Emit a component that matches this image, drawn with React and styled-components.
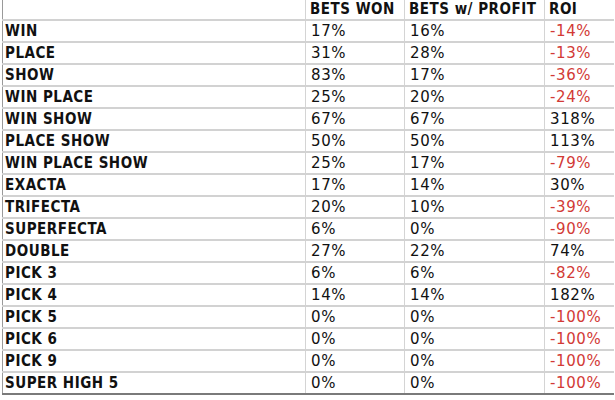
import React from "react";
import styled, { createGlobalStyle } from "styled-components";

const Global = createGlobalStyle`
  html, body { margin: 0; padding: 0; background: #fff; }
  body { font-family: "DejaVu Sans", Verdana, sans-serif; }
`;

const Frame = styled.div`
  width: 615px;
  height: 400px;
  overflow: hidden;
  background: #fff;
  padding-left: 2px;
  box-sizing: border-box;
`;

const Table = styled.table`
  border-collapse: collapse;
  table-layout: fixed;
  width: 611px;
  border-left: 1px solid #9a9a9a;
  border-bottom: 2px solid #7a7a7a;
`;

const Col = styled.col`
  width: ${(p) => p.$w}px;
`;

const Cell = styled.td`
  height: 20px;
  padding: 0 0 0 ${(p) => (p.$first ? 2 : 5)}px;
  border-top: 2px solid #d2d2d2;
  border-left: ${(p) => (p.$first ? "none" : "1px solid #d4d4d4")};
  font-size: 15px;
  line-height: 20px;
  white-space: nowrap;
  overflow: hidden;
  color: ${(p) => (p.$neg ? "#d23a36" : "#111")};
  font-weight: ${(p) => (p.$first ? 700 : 400)};
  font-family: ${(p) => (p.$first ? '"DejaVu Sans Condensed", "DejaVu Sans", sans-serif' : '"DejaVu Sans", Verdana, sans-serif')};
  letter-spacing: ${(p) => (p.$first ? "0.5px" : "0.6px")};
`;

const Head = styled.th`
  height: 19px;
  padding: 0 0 0 4px;
  text-align: left;
  font-size: 15px;
  line-height: 19px;
  font-weight: 700;
  color: #111;
  white-space: nowrap;
  letter-spacing: 0.5px;
  font-family: "DejaVu Sans Condensed", "DejaVu Sans", sans-serif;
  border-left: ${(p) => (p.$first ? "none" : "1px solid #d4d4d4")};
`;

const rows = [
  ["WIN", "17%", "16%", "-14%"],
  ["PLACE", "31%", "28%", "-13%"],
  ["SHOW", "83%", "17%", "-36%"],
  ["WIN PLACE", "25%", "20%", "-24%"],
  ["WIN SHOW", "67%", "67%", "318%"],
  ["PLACE SHOW", "50%", "50%", "113%"],
  ["WIN PLACE SHOW", "25%", "17%", "-79%"],
  ["EXACTA", "17%", "14%", "30%"],
  ["TRIFECTA", "20%", "10%", "-39%"],
  ["SUPERFECTA", "6%", "0%", "-90%"],
  ["DOUBLE", "27%", "22%", "74%"],
  ["PICK 3", "6%", "6%", "-82%"],
  ["PICK 4", "14%", "14%", "182%"],
  ["PICK 5", "0%", "0%", "-100%"],
  ["PICK 6", "0%", "0%", "-100%"],
  ["PICK 9", "0%", "0%", "-100%"],
  ["SUPER HIGH 5", "0%", "0%", "-100%"],
];

export default function App() {
  return (
    <Frame>
      <Global />
      <Table>
        <colgroup>
          <Col $w={303} />
          <Col $w={99} />
          <Col $w={140} />
          <Col $w={69} />
        </colgroup>
        <thead>
          <tr>
            <Head $first></Head>
            <Head>BETS WON</Head>
            <Head>BETS w/ PROFIT</Head>
            <Head>ROI</Head>
          </tr>
        </thead>
        <tbody>
          {rows.map((r) => (
            <tr key={r[0]}>
              <Cell $first>{r[0]}</Cell>
              <Cell>{r[1]}</Cell>
              <Cell>{r[2]}</Cell>
              <Cell $neg={r[3].startsWith("-")}>{r[3]}</Cell>
            </tr>
          ))}
        </tbody>
      </Table>
    </Frame>
  );
}
